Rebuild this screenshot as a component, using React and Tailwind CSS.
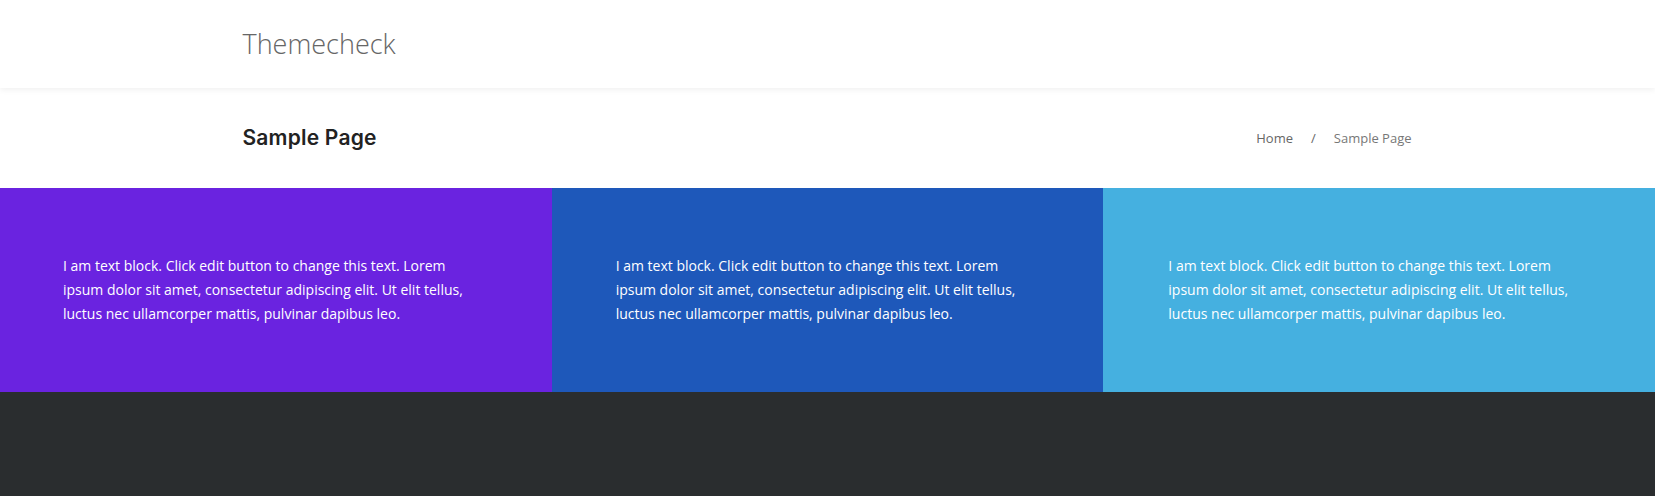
import React from 'react'

export default function App() {
  const blocks = [
    { bg: 'bg-[#6a23e0]', pad: 'pl-[63px]' },
    { bg: 'bg-[#1e58ba]', pad: 'pl-[64px]' },
    { bg: 'bg-[#45b0e0]', pad: 'pl-[65px]' },
  ]

  const text =
    'I am text block. Click edit button to change this text. Lorem ipsum dolor sit amet, consectetur adipiscing elit. Ut elit tellus, luctus nec ullamcorper mattis, pulvinar dapibus leo.'

  return (
    <div className="min-h-[496px] bg-[#2a2d2f] font-['Open_Sans',sans-serif]">
      {/* Header */}
      <header className="relative z-10 h-[88px] bg-white shadow-[0_2px_6px_rgba(0,0,0,0.06)]">
        <div className="mx-auto flex h-full max-w-[1170px] items-center">
          <span className="text-[27px] font-light text-[#666] mt-[1px]">Themecheck</span>
        </div>
      </header>

      {/* Page title */}
      <div className="h-[100px] bg-white">
        <div className="mx-auto flex h-full max-w-[1170px] items-center justify-between">
          <h1 className="font-['Inter',sans-serif] text-[21px] font-semibold text-[#222] tracking-[0.2px]">
            Sample Page
          </h1>
          <nav className="mt-[2px] mr-[1px] flex items-center text-[13px] text-[#666]">
            <span>Home</span>
            <span className="px-[18px]">/</span>
            <span className="text-[#777]">Sample Page</span>
          </nav>
        </div>
      </div>

      {/* Text blocks */}
      <div className="grid grid-cols-3">
        {blocks.map((b, i) => (
          <div key={i} className={`${b.bg} ${b.pad} h-[204px] pt-[66px]`}>
            <p className="w-[420px] text-[14px] leading-[24px] text-white">{text}</p>
          </div>
        ))}
      </div>
    </div>
  )
}
